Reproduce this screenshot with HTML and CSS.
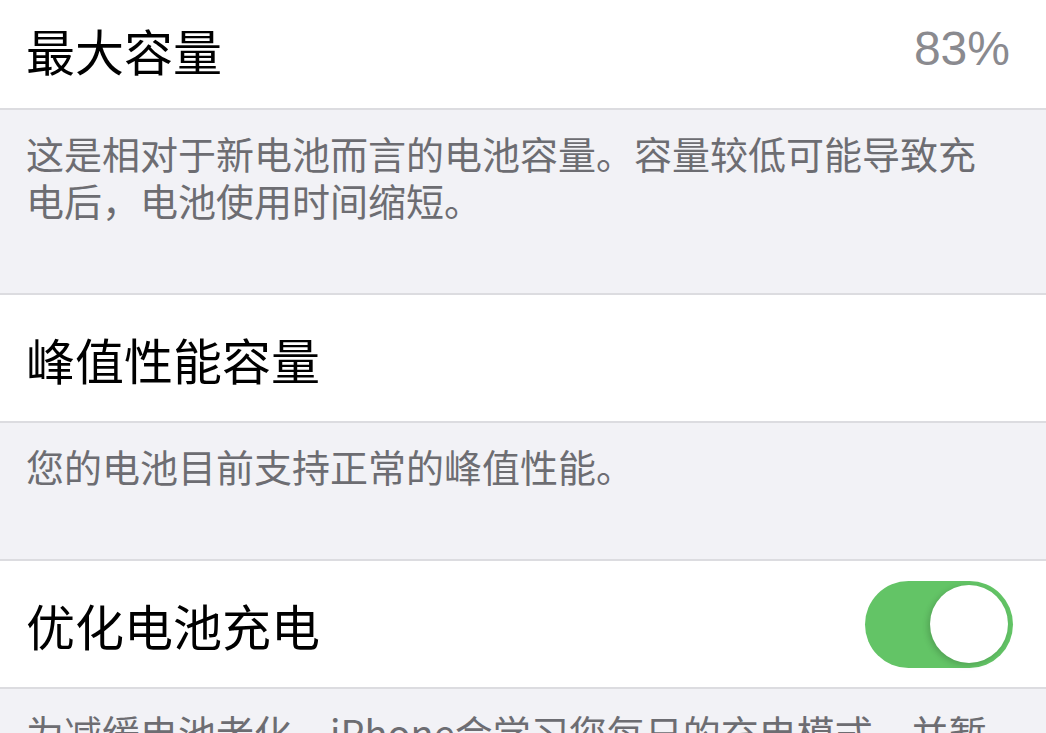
FILE: index.html
```html
<!DOCTYPE html>
<html lang="zh-CN">
<head>
<meta charset="utf-8">
<title>电池健康</title>
<link rel="stylesheet" href="styles.css">
</head>
<body>
<div class="page">
  <div class="row row-first">
    <span class="label">最大容量</span>
    <span class="value">83%</span>
  </div>
  <div class="footer">这是相对于新电池而言的电池容量。容量较低可能导致充电后，电池使用时间缩短。</div>
  <div class="row">
    <span class="label">峰值性能容量</span>
  </div>
  <div class="footer">您的电池目前支持正常的峰值性能。</div>
  <div class="row">
    <span class="label">优化电池充电</span>
    <span class="switch on"><span class="knob"></span></span>
  </div>
  <div class="footer">为减缓电池老化，iPhone会学习您每日的充电模式，并暂缓充电至 80% 以上，直到您需要用电时再继续充电。</div>
</div>
</body>
</html>
```
FILE: styles.css
```css
html, body {
  margin: 0;
  padding: 0;
  background: #f2f2f6;
}
body {
  font-family: "Noto Sans CJK SC", "Noto Sans", sans-serif;
  overflow: hidden;
}
.page {
  width: 1046px;
  display: flex;
  flex-direction: column;
}
.row {
  background: #ffffff;
  height: 126px;
  display: flex;
  align-items: center;
  justify-content: space-between;
  padding: 0 33px 0 26px;
  border-bottom: 2px solid #dcdce0;
  box-sizing: content-box;
}
.row-first {
  height: 98px;
  padding-bottom: 10px;
}
.label {
  font-size: 49px;
  color: #000000;
  font-weight: 400;
  line-height: 1;
}
.value {
  font-family: "Liberation Sans", "Noto Sans", sans-serif;
  font-size: 48px;
  color: #8a8a8f;
  margin-right: 3px;
  line-height: 1;
}
.footer {
  background: #f2f2f6;
  color: #6d6d72;
  font-size: 38px;
  line-height: 47px;
  padding: 19px 34px 70px 26px;
  border-bottom: 2px solid #dcdce0;
}
.footer:last-child {
  border-bottom: 0;
}
.switch {
  width: 148px;
  height: 87px;
  border-radius: 44px;
  background: #63c466;
  display: flex;
  align-items: center;
  justify-content: flex-end;
  padding: 0 5px;
  box-sizing: border-box;
}
.knob {
  width: 78px;
  height: 78px;
  border-radius: 50%;
  background: #ffffff;
  box-shadow: -2px 2px 6px rgba(0, 0, 0, 0.18);
}
```
